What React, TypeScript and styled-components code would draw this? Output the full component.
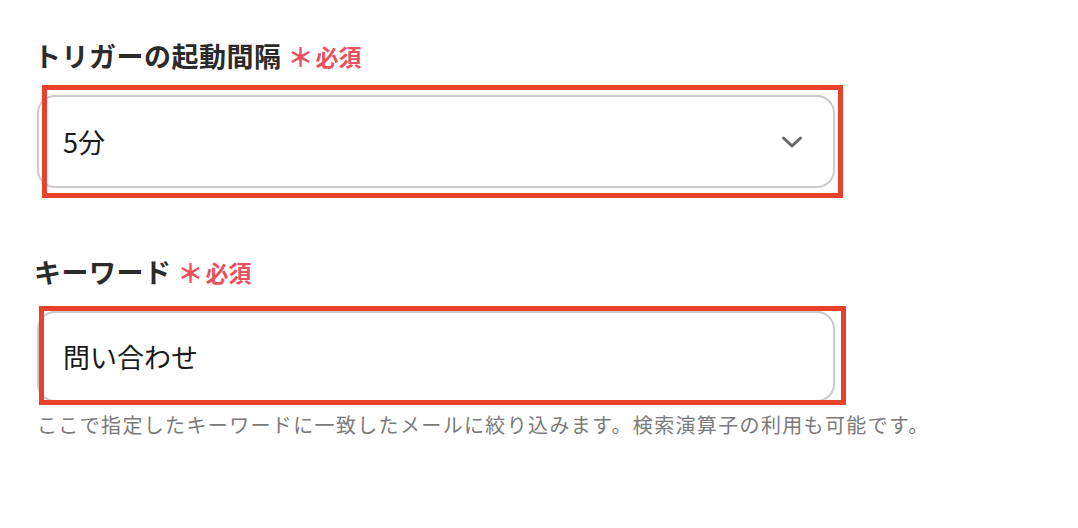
import React from 'react'
import styled, { createGlobalStyle } from 'styled-components'

const GlobalStyle = createGlobalStyle`
  html, body {
    margin: 0;
    padding: 0;
    background: #fff;
    font-family: "Noto Sans CJK JP", "Noto Sans", sans-serif;
    color: #333;
  }
`

const Page = styled.div`
  width: 1078px;
  height: 528px;
  box-sizing: border-box;
  padding: 39px 0 0 37px;
`

const Field = styled.div<{ $gap?: number }>`
  width: 798px;
  margin-bottom: ${p => p.$gap ?? 0}px;
`

const Label = styled.div`
  display: flex;
  align-items: center;
  font-size: 27px;
  line-height: 34px;
  font-weight: 700;
  letter-spacing: 0.5px;
  color: #2b2b2b;
  margin-bottom: 22px;
  margin-left: -3px;
`

const Required = styled.span`
  display: inline-flex;
  align-items: center;
  color: #e8505f;
  font-size: 23px;
  font-weight: 700;
  letter-spacing: 0;
  margin-left: 6px;
  .star {
    font-size: 26px;
    margin-right: 2px;
    line-height: 1;
  }
`

const InputWrap = styled.div`
  position: relative;
`

const Box = styled.div<{ $height: number }>`
  height: ${p => p.$height}px;
  box-sizing: border-box;
  border: 2px solid #cbcbcb;
  border-radius: 18px;
  display: flex;
  align-items: center;
  justify-content: space-between;
  padding: 0 30px 0 24px;
  font-size: 27px;
  color: #1a1a1a;
`

const Highlight = styled.div<{ $t: number; $l: number; $r: number; $b: number }>`
  position: absolute;
  top: ${p => p.$t}px;
  left: ${p => p.$l}px;
  right: ${p => p.$r}px;
  bottom: ${p => p.$b}px;
  border: 5px solid #e8432a;
  pointer-events: none;
`

const Help = styled.div`
  margin-top: 10px;
  font-size: 20px;
  letter-spacing: 1.35px;
  line-height: 26px;
  color: #7a7a7a;
  white-space: nowrap;
`

const Chevron = () => (
  <svg width="22" height="14" viewBox="0 0 22 14" fill="none">
    <path d="M2.5 3 L11 11 L19.5 3" stroke="#666" strokeWidth="3" strokeLinecap="round" strokeLinejoin="round" />
  </svg>
)

const RequiredMark = () => (
  <Required>
    <span className="star">＊</span>必須
  </Required>
)

export default function App() {
  return (
    <>
      <GlobalStyle />
      <Page>
        <Field $gap={67}>
          <Label>
            トリガーの起動間隔<RequiredMark />
          </Label>
          <InputWrap>
            <Box $height={93}>
              <span>5分</span>
              <Chevron />
            </Box>
            <Highlight $t={-10} $l={5} $r={-8} $b={-10} />
          </InputWrap>
        </Field>
        <Field>
          <Label>
            キーワード<RequiredMark />
          </Label>
          <InputWrap>
            <Box $height={91}>
              <span>問い合わせ</span>
            </Box>
            <Highlight $t={-5} $l={2} $r={-11} $b={-3} />
          </InputWrap>
          <Help>ここで指定したキーワードに一致したメールに絞り込みます。検索演算子の利用も可能です。</Help>
        </Field>
      </Page>
    </>
  )
}
